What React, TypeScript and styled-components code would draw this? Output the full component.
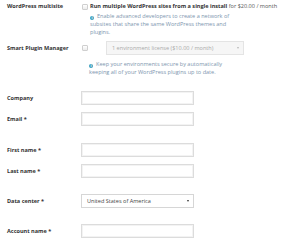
import React from 'react';
import styled, { createGlobalStyle } from 'styled-components';

const GlobalStyle = createGlobalStyle`
	html, body {
		margin: 0;
		padding: 0;
		background: #ffffff;
	}
	body {
		font-family: 'Open Sans', 'Liberation Sans', sans-serif;
		font-size: 5.55px;
		line-height: 8px;
		color: #333333;
	}
`;

const Form = styled.div`
	width: 300px;
	height: 244px;
	padding: 2px 0 0 7px;
	box-sizing: border-box;
	overflow: hidden;
`;

const Row = styled.div<{ $top?: number; $align?: string }>`
	display: grid;
	grid-template-columns: 74px 1fr;
	align-items: ${(p) => p.$align || 'center'};
	margin-top: ${(p) => p.$top || 0}px;
`;

const Label = styled.div`
	font-weight: 700;
	color: #333333;
	white-space: nowrap;
`;

const Control = styled.div<{ $center?: boolean }>`
	display: flex;
	align-items: ${(p) => (p.$center ? 'center' : 'flex-start')};
`;

const Checkbox = styled.span<{ $top?: number }>`
	display: block;
	width: 4px;
	height: 4px;
	margin: ${(p) => p.$top || 0}px 0 0 1px;
	border: 1px solid #cfcfcf;
	border-radius: 1px;
	background: linear-gradient(#ffffff, #ececec);
	flex: none;
`;

const TextBlock = styled.div`
	margin-left: 2px;
`;

const Title = styled.div`
	white-space: nowrap;
	b {
		font-weight: 700;
		color: #333333;
	}
	span {
		color: #555555;
	}
`;

const Help = styled.div<{ $top?: number; $indent?: number }>`
	margin-top: ${(p) => p.$top || 0}px;
	margin-left: ${(p) => p.$indent || 0}px;
	color: #7d95ae;
	width: 146px;
`;

const InfoIcon = styled.span`
	display: inline-block;
	width: 4px;
	height: 4px;
	border-radius: 50%;
	background: #3b9fbd;
	color: #ffffff;
	font-size: 3.5px;
	line-height: 4px;
	font-weight: 700;
	text-align: center;
	vertical-align: -0.5px;
	margin-right: 3px;
`;

const Select = styled.div<{ $disabled?: boolean; $width: number; $left?: number }>`
	display: flex;
	align-items: center;
	justify-content: space-between;
	box-sizing: border-box;
	width: ${(p) => p.$width}px;
	height: 14px;
	margin-left: ${(p) => p.$left || 0}px;
	padding: 0 4px 0 5px;
	border: 1px solid ${(p) => (p.$disabled ? '#e4e4e4' : '#d6d6d6')};
	background: ${(p) => (p.$disabled ? '#f6f6f6' : '#ffffff')};
	color: ${(p) => (p.$disabled ? '#a9a9a9' : '#444444')};
	white-space: nowrap;
`;

const Arrow = styled.span<{ $disabled?: boolean }>`
	width: 0;
	height: 0;
	border-left: 1.5px solid transparent;
	border-right: 1.5px solid transparent;
	border-top: 2.5px solid ${(p) => (p.$disabled ? '#b8b8b8' : '#333333')};
`;

const Input = styled.div`
	box-sizing: border-box;
	width: 113px;
	height: 14px;
	border: 1px solid #dcdcdc;
	box-shadow: inset 0 0 0 1px #f3f3f3;
	background: #ffffff;
`;

const App: React.FC = () => {
	return (
		<>
			<GlobalStyle />
			<Form>
				<Row $align="start">
					<Label>WordPress multisite</Label>
					<Control>
						<Checkbox $top={2} />
						<TextBlock>
							<Title>
								<b>Run multiple WordPress sites from a single install</b> <span>for $20.00 / month</span>
							</Title>
							<Help $top={2}>
								<InfoIcon>i</InfoIcon>Enable advanced developers to create a network of subsites that share the same WordPress themes and plugins.
							</Help>
						</TextBlock>
					</Control>
				</Row>
				<Row $top={5}>
					<Label>Smart Plugin Manager</Label>
					<Control $center>
						<Checkbox />
						<Select $disabled $width={138} $left={18}>
							1 environment license ($10.00 / month)
							<Arrow $disabled />
						</Select>
					</Control>
				</Row>
				<Row $top={5}>
					<span />
					<Help $indent={8}>
						<InfoIcon>i</InfoIcon>Keep your environments secure by automatically keeping all of your WordPress plugins up to date.
					</Help>
				</Row>
				<Row $top={15}>
					<Label>Company</Label>
					<Input />
				</Row>
				<Row $top={7}>
					<Label>Email *</Label>
					<Input />
				</Row>
				<Row $top={17}>
					<Label>First name *</Label>
					<Input />
				</Row>
				<Row $top={7}>
					<Label>Last name *</Label>
					<Input />
				</Row>
				<Row $top={16}>
					<Label>Data center *</Label>
					<Select $width={113}>
						United States of America
						<Arrow />
					</Select>
				</Row>
				<Row $top={16}>
					<Label>Account name *</Label>
					<Input />
				</Row>
			</Form>
		</>
	);
};

export default App;
